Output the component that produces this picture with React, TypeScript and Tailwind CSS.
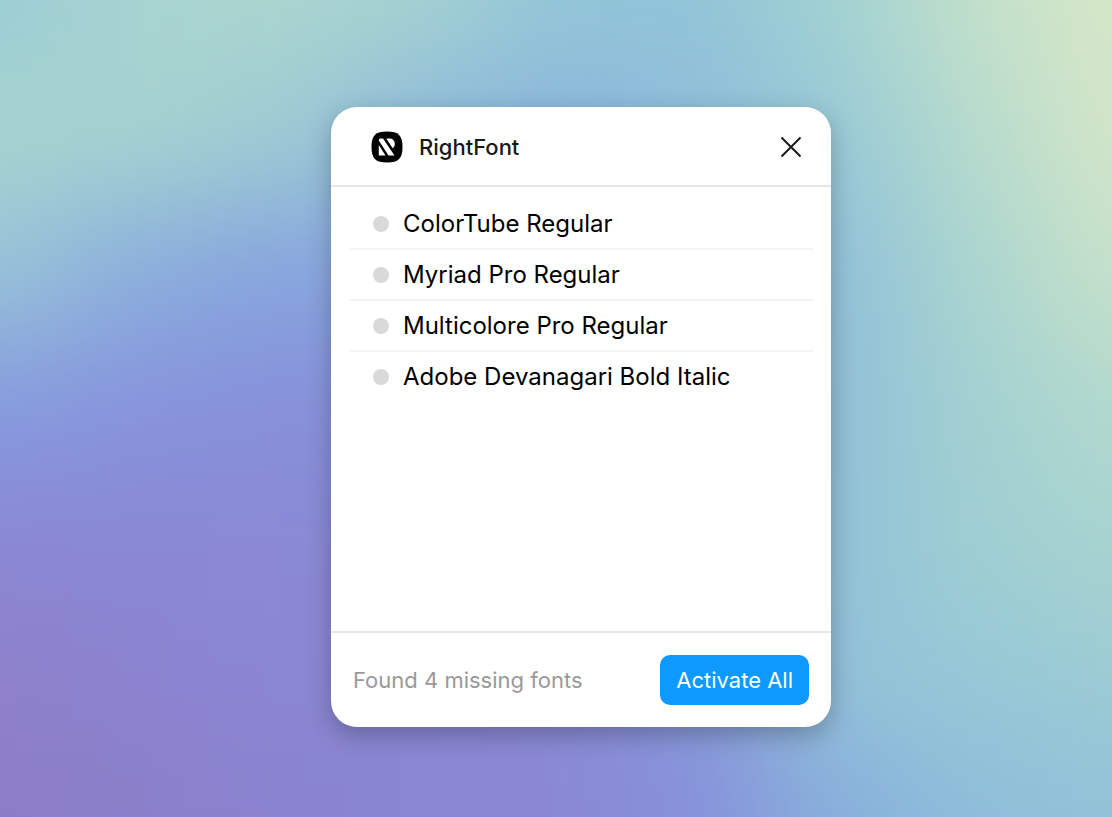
import React, { useState } from 'react';

const missingFonts = [
  'ColorTube Regular',
  'Myriad Pro Regular',
  'Multicolore Pro Regular',
  'Adobe Devanagari Bold Italic',
];

// Colour nodes of the wallpaper, row by row
const wallpaper = [
  ['#9ccdd6', '#a7d3d0', '#abd5cf', '#a5d2d1', '#93c6d7', '#91c4d8', '#a2d2d2', '#c1e0ca', '#d7e7c8'],
  ['#a6d3cf', '#a6d2d0', '#9ecbd3', '#8eb9da', '#8bb4dc', '#8ebdda', '#98c9d6', '#b6dbcd', '#d3e5c8'],
  ['#98c2d8', '#8aaedd', '#86a4de', '#88a8dd', '#88acdc', '#8bb4dc', '#90c0d9', '#aad5cf', '#c6e1ca'],
  ['#859bde', '#8793dc', '#8790d9', '#8790d8', '#8799da', '#88a5db', '#92c0d8', '#a2d0d1', '#b2d9ce'],
  ['#8b87d3', '#8a88d4', '#8b89d6', '#8788d4', '#868fd8', '#86a0dc', '#92c2d8', '#9fced2', '#a7d3d0'],
  ['#8e80ca', '#8b83cf', '#8b86d2', '#8a86d2', '#8989d4', '#8699d9', '#93c2d8', '#96c8d6', '#9ccbd4'],
  ['#8c7cc6', '#8b7ec9', '#8a83cf', '#8a86d2', '#8a88d4', '#8790da', '#87aedc', '#8dbdda', '#92c2d8'],
];

const Wallpaper: React.FC = () => (
  <svg
    className="absolute inset-0 h-full w-full"
    viewBox="0 0 800 600"
    preserveAspectRatio="none"
    aria-hidden="true"
  >
    <filter id="soften" x="-20%" y="-20%" width="140%" height="140%" colorInterpolationFilters="sRGB">
      <feGaussianBlur stdDeviation="40" />
    </filter>
    <g filter="url(#soften)" shapeRendering="crispEdges">
      {wallpaper.map((row, y) =>
        row.map((fill, x) => {
          const left = x === 0 ? -250 : x * 100 - 50;
          const top = y === 0 ? -250 : y * 100 - 50;
          return <rect key={`${x}-${y}`} x={left} y={top} width="400" height="400" fill={fill} />;
        })
      )}
    </g>
  </svg>
);

const Logo: React.FC = () => (
  <svg className="h-8 w-8" viewBox="0 0 32 32" aria-hidden="true">
    <path
      d="M16 .5c11.500 0 15.500 4 15.500 15.500S27.500 31.500 16 31.500.5 27.500.5 16 4.500.5 16 .5Z"
      fill="#000"
    />
    <path
      d="M9.500 7.500h2.500L23.500 24.500h-6L7.800 9.500Q7.500 7.500 9.500 7.500ZM7.800 14 14.500 24.500H7.800ZM15.300 7.500H18c3.500 0 5.800 2 5.800 5.300 0 2-.8 3.500-2.200 4.500Z"
      fill="#fff"
    />
  </svg>
);

export default function App() {
  const [open, setOpen] = useState(true);
  const [activated, setActivated] = useState(false);

  return (
    <main className="relative flex min-h-screen items-center justify-center overflow-hidden pt-4 pl-[50px] font-['Inter',sans-serif]">
      <Wallpaper />
      {open && (
        <section className="relative flex min-h-[620px] w-full max-w-[500px] flex-col rounded-[26px] bg-white shadow-[0_8px_24px_rgba(0,0,0,0.25)]">
          <header className="flex h-20 items-center gap-4 border-b-2 border-[#e6e6e6] pt-[2px] pr-7 pl-10">
            <Logo />
            <h1 className="flex-1 text-[22px] leading-8 font-medium text-[#18191b]">RightFont</h1>
            <button type="button" aria-label="Close" onClick={() => setOpen(false)}>
              <svg className="h-6 w-6" viewBox="0 0 24 24" fill="none" stroke="#18191b" strokeWidth="2">
                <path d="M2.500 2.500 21.500 21.500M21.500 2.500 2.500 21.500" />
              </svg>
            </button>
          </header>

          <ul className="flex-1 px-[18px] pt-3">
            {missingFonts.map(name => (
              <li
                key={name}
                className="flex h-[51px] items-center gap-[14px] border-b-2 border-[#f3f3f3] px-6 pt-[2px] last:border-transparent"
              >
                <span className={activated ? 'h-4 w-4 rounded-full bg-green-500' : 'h-4 w-4 rounded-full bg-[#d9d9d9]'} />
                <span className="text-2xl text-black">{name}</span>
              </li>
            ))}
          </ul>

          <footer className="flex items-center justify-between border-t-2 border-[#e6e6e6] p-[22px]">
            <p className="text-[22px] leading-8 text-[#999999]">Found {missingFonts.length} missing fonts</p>
            <button
              type="button"
              className="h-[50px] rounded-[10px] bg-[#0d99ff] px-4 text-[22px] leading-8 text-white"
              onClick={() => setActivated(true)}
            >
              Activate All
            </button>
          </footer>
        </section>
      )}
    </main>
  );
}
